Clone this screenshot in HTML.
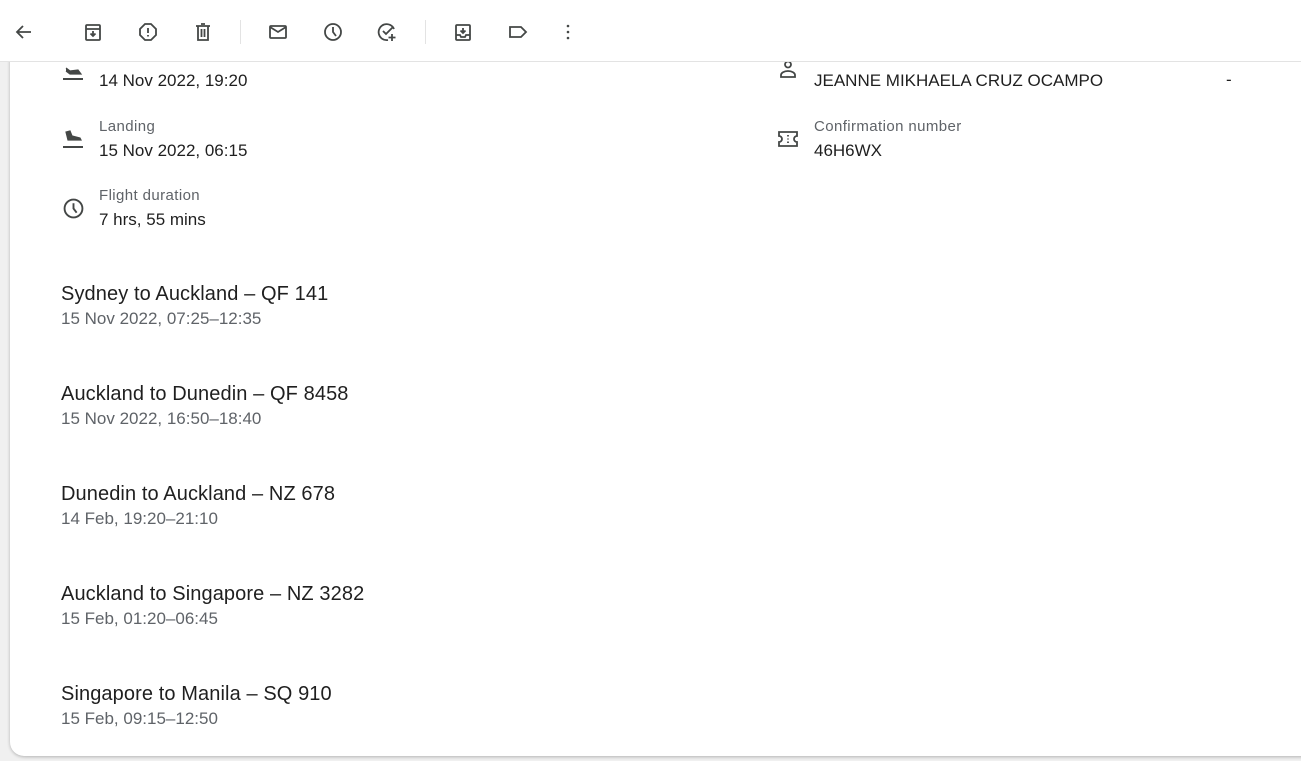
<!DOCTYPE html>
<html><head><meta charset="utf-8"><style>
*{margin:0;padding:0;box-sizing:border-box}
body{width:1301px;height:761px;background:#f0f0f0;font-family:"Liberation Sans",Arial,sans-serif;position:relative;overflow:hidden;color:#1f1f1f}
.card{position:absolute;left:10px;top:0;width:1300px;height:756px;background:#fff;border-radius:0 0 0 14px;box-shadow:0 1px 3px rgba(0,0,0,.25)}
.bar{position:absolute;left:0;top:0;width:1301px;height:62px;background:#fff;border-bottom:1px solid #e3e3e3;z-index:2}
.ic{position:absolute;top:22px;width:20px;height:20px}
.sep{position:absolute;top:20px;width:1px;height:24px;background:#e3e3e3}
.t{position:absolute;white-space:nowrap}
.lab{font-size:15px;color:#5f6368;letter-spacing:.4px}
.val{font-size:17px;color:#1f1f1f}
.h{font-size:20px;color:#1f1f1f;letter-spacing:.1px}
.s{font-size:17px;color:#5f6368}
svg{stroke:#444746;fill:none;stroke-width:1.8}
</style></head><body>
<div class="card"></div>
<div class="bar">
<svg class="ic" style="left:14px" viewBox="0 0 20 20"><path d="M17 10H4M9 4l-6 6 6 6"/></svg>
<svg class="ic" style="left:83px" viewBox="0 0 20 20"><rect x="3" y="3" width="14" height="15" rx="1"/><path d="M3 7h14M10 9v5M7.5 11.5 10 14l2.5-2.5"/></svg>
<svg class="ic" style="left:138px" viewBox="0 0 20 20"><path d="M7 2h6l5 5v6l-5 5H7l-5-5V7z"/><path d="M10 6v5M10 13v1.5"/></svg>
<svg class="ic" style="left:193px" viewBox="0 0 20 20"><path d="M3 4h14M8 2h4M5 4v14h10V4M8.5 7v8M11.5 7v8"/></svg>
<div class="sep" style="left:240px"></div>
<svg class="ic" style="left:268px" viewBox="0 0 20 20"><rect x="2" y="4" width="16" height="12" rx="1"/><path d="M2 5l8 5 8-5"/></svg>
<svg class="ic" style="left:323px" viewBox="0 0 20 20"><circle cx="10" cy="10" r="8"/><path d="M10 5v5l3 4"/></svg>
<svg class="ic" style="left:377px" viewBox="0 0 20 20"><path d="M17 7A8 8 0 1 0 11 18"/><path d="M6 9l3 3 7-7M15 12v7M11.5 15.5h7"/></svg>
<div class="sep" style="left:425px"></div>
<svg class="ic" style="left:453px" viewBox="0 0 20 20"><rect x="3" y="3" width="14" height="15" rx="1"/><path d="M3 13h4l1 2h4l1-2h4M10 6v5M7.5 8.5 10 11l2.5-2.5"/></svg>
<svg class="ic" style="left:508px" viewBox="0 0 20 20"><path d="M2 5h11l5 5-5 5H2z"/></svg>
<svg class="ic" style="left:558px" viewBox="0 0 20 20"><circle cx="10" cy="4" r="1.3" fill="#444746" stroke="none"/><circle cx="10" cy="10" r="1.3" fill="#444746" stroke="none"/><circle cx="10" cy="16" r="1.3" fill="#444746" stroke="none"/></svg>
</div>

<svg style="position:absolute;left:62px;top:62px;width:22px;height:20px" viewBox="0 0 22 20"><path d="M1 17h20" stroke-width="2"/><path d="M4 9l4 3h11l-3-4-8 1-4-3" fill="#444746" stroke-width="1.2"/></svg>
<div class="t val" style="left:99px;top:71px">14 Nov 2022, 19:20</div>

<svg style="position:absolute;left:62px;top:128px;width:22px;height:22px" viewBox="0 0 22 22"><path d="M1 19h20" stroke-width="2"/><path d="M4 4l2 8h13l-1-2-8-2-2-5z" fill="#444746" stroke-width="1.2"/></svg>
<div class="t lab" style="left:99px;top:118px">Landing</div>
<div class="t val" style="left:99px;top:141px">15 Nov 2022, 06:15</div>

<svg style="position:absolute;left:63px;top:198px;width:21px;height:21px" viewBox="0 0 20 20"><circle cx="10" cy="10" r="8.5"/><path d="M10 5v5l3 4"/></svg>
<div class="t lab" style="left:99px;top:187px">Flight duration</div>
<div class="t val" style="left:99px;top:210px">7 hrs, 55 mins</div>

<svg style="position:absolute;left:778px;top:60px;width:20px;height:20px" viewBox="0 0 20 20"><circle cx="10" cy="4.5" r="3"/><path d="M3 17v-2c0-2 3-4 7-4s7 2 7 4v2z"/></svg>
<div class="t val" style="left:814px;top:71px">JEANNE MIKHAELA CRUZ OCAMPO</div>
<div class="t val" style="left:1226px;top:70px">-</div>

<svg style="position:absolute;left:777px;top:129px;width:22px;height:20px" viewBox="0 0 22 20"><path d="M2 3h18v4a3 3 0 0 0 0 6v4H2v-4a3 3 0 0 0 0-6z"/><path d="M11 6v1.5M11 9.5v1M11 12.5v1.5"/></svg>
<div class="t lab" style="left:814px;top:118px">Confirmation number</div>
<div class="t val" style="left:814px;top:141px">46H6WX</div>

<div class="t h" style="left:61px;top:283px">Sydney to Auckland – QF 141</div>
<div class="t s" style="left:61px;top:309px">15 Nov 2022, 07:25–12:35</div>
<div class="t h" style="left:61px;top:383px">Auckland to Dunedin – QF 8458</div>
<div class="t s" style="left:61px;top:409px">15 Nov 2022, 16:50–18:40</div>
<div class="t h" style="left:61px;top:483px">Dunedin to Auckland – NZ 678</div>
<div class="t s" style="left:61px;top:509px">14 Feb, 19:20–21:10</div>
<div class="t h" style="left:61px;top:583px">Auckland to Singapore – NZ 3282</div>
<div class="t s" style="left:61px;top:609px">15 Feb, 01:20–06:45</div>
<div class="t h" style="left:61px;top:683px">Singapore to Manila – SQ 910</div>
<div class="t s" style="left:61px;top:709px">15 Feb, 09:15–12:50</div>
</body></html>
